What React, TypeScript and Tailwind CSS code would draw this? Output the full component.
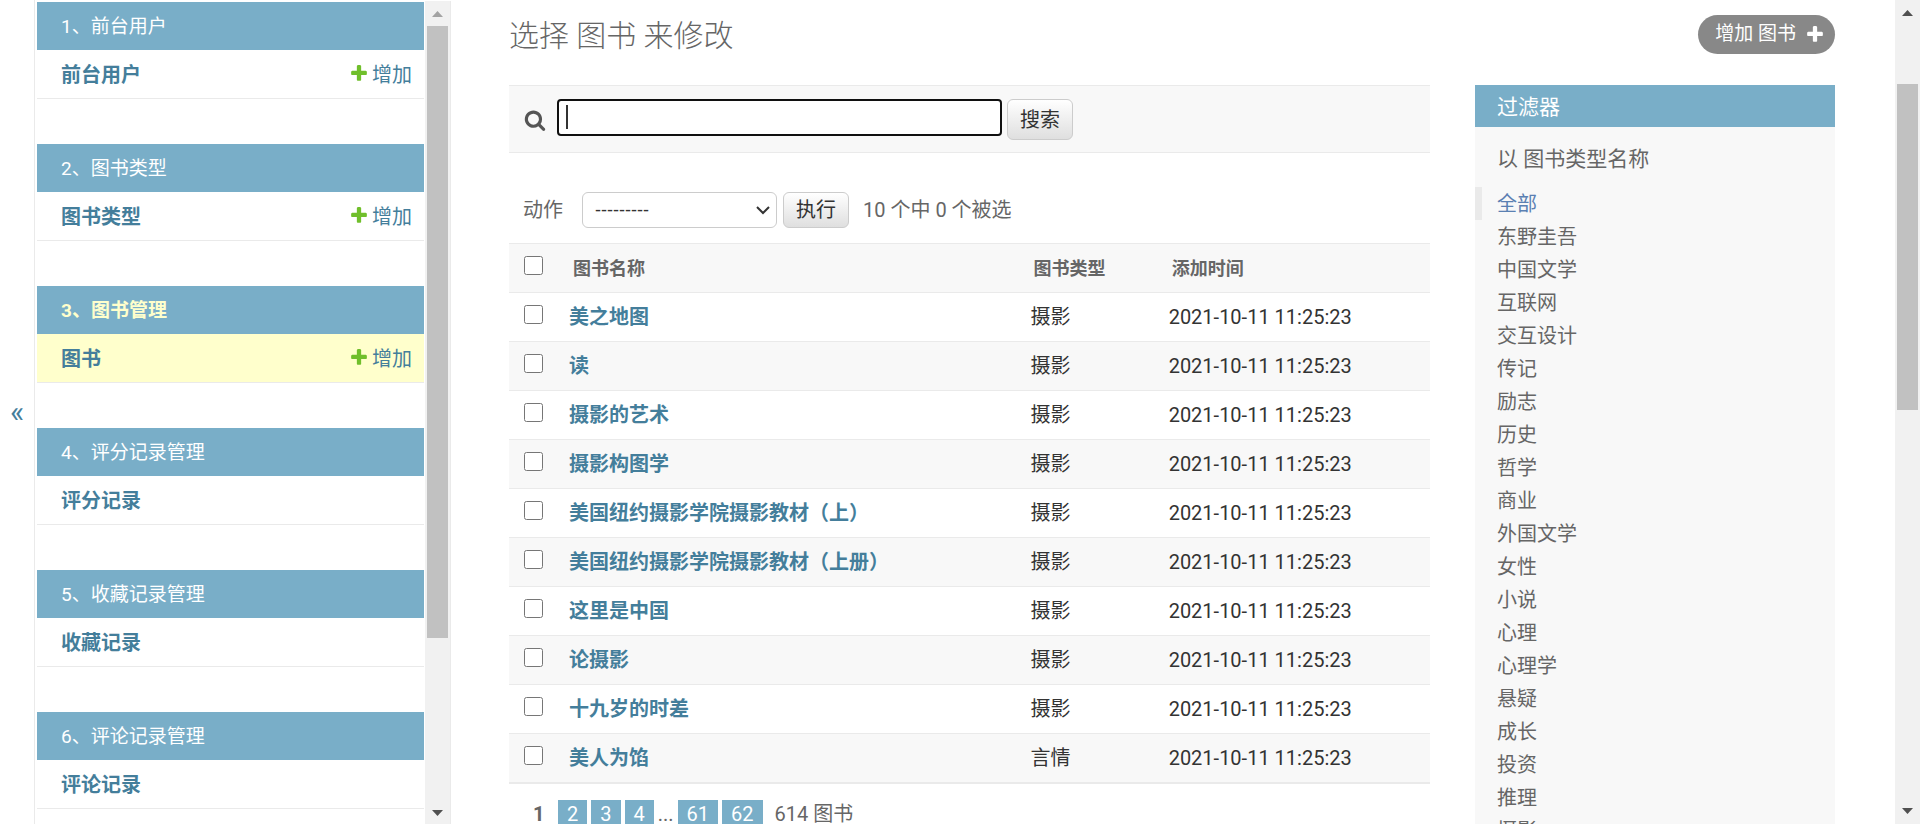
const navApps = [
  { caption: "1、前台用户", model: "前台用户", canAdd: true },
  { caption: "2、图书类型", model: "图书类型", canAdd: true },
  { caption: "3、图书管理", model: "图书", canAdd: true, current: true },
  { caption: "4、评分记录管理", model: "评分记录" },
  { caption: "5、收藏记录管理", model: "收藏记录" },
  { caption: "6、评论记录管理", model: "评论记录" },
];

const books = [
  { name: "美之地图", type: "摄影" },
  { name: "读", type: "摄影" },
  { name: "摄影的艺术", type: "摄影" },
  { name: "摄影构图学", type: "摄影" },
  { name: "美国纽约摄影学院摄影教材（上）", type: "摄影" },
  { name: "美国纽约摄影学院摄影教材（上册）", type: "摄影" },
  { name: "这里是中国", type: "摄影" },
  { name: "论摄影", type: "摄影" },
  { name: "十九岁的时差", type: "摄影" },
  { name: "美人为馅", type: "言情" },
];

const bookTypes = [
  "全部", "东野圭吾", "中国文学", "互联网", "交互设计", "传记", "励志",
  "历史", "哲学", "商业", "外国文学", "女性", "小说", "心理", "心理学",
  "悬疑", "成长", "投资", "推理", "摄影",
];

const PlusIcon = ({ className }: { className: string }) => (
  <svg viewBox="0 0 1792 1792" className={`size-5 shrink-0 ${className}`} fill="currentColor" aria-hidden="true">
    <path d="M1600 796v192q0 40-28 68t-68 28h-416v416q0 40-28 68t-68 28h-192q-40 0-68-28t-28-68v-416h-416q-40 0-68-28t-28-68v-192q0-40 28-68t68-28h416v-416q0-40 28-68t68-28h192q40 0 68 28t28 68v416h416q40 0 68 28t28 68z" />
  </svg>
);

const SearchIcon = () => (
  <svg viewBox="0 0 1792 1792" className="size-[22px]" fill="#555" aria-hidden="true">
    <path d="M1216 832q0-185-131.5-316.5t-316.5-131.5-316.5 131.5-131.5 316.5 131.5 316.5 316.5 131.5 316.5-131.5 131.5-316.5zm512 832q0 52-38 90t-90 38q-54 0-90-38l-343-342q-179 124-399 124-143 0-273.5-55.5t-225-150-150-225-55.5-273.5 55.5-273.5 150-225 225-150 273.5-55.5 273.5 55.5 225 150 150 225 55.5 273.5q0 220-124 399l343 343q37 37 37 90z" />
  </svg>
);

const ScrollArrow = ({ down, color }: { down?: boolean; color: string }) => (
  <svg viewBox="0 0 11 6" className="w-[11px] h-[6px] shrink-0" fill={color} aria-hidden="true">
    <path d={down ? "M0 0H11L5.5 6Z" : "M0 6H11L5.5 0Z"} />
  </svg>
);

const Sidebar = () => (
  <nav className="w-[390px] shrink-0 pl-0.5 pr-px pt-0.5 overflow-hidden">
    {navApps.map((app) => (
      <section key={app.caption} className="mb-[45px]">
        <h2 className="h-12 pl-6 pt-0.5 flex items-center bg-[#79aec8]">
          <a
            href="#"
            className={app.current ? "text-[19px] font-bold text-[#ffffcc]" : "text-[19px] text-white"}
          >
            {app.caption}
          </a>
        </h2>
        <div
          className={`h-[49px] pl-6 pr-3 pt-0.5 flex items-center justify-between border-b border-[#eaeaea] text-[#447e9b] ${
            app.current ? "bg-[#ffffcc]" : "bg-white"
          }`}
        >
          <a href="#" className="font-bold">
            {app.model}
          </a>
          {app.canAdd && (
            <a href="#" className="flex items-center gap-[3px]">
              <PlusIcon className="mb-1 text-[#70bf2b]" />
              增加
            </a>
          )}
        </div>
      </section>
    ))}
  </nav>
);

const ChangeList = () => (
  <div className="flex-1 min-w-0">
    <form className="h-[68px] px-[15px] pt-[13px] flex items-start bg-[#f8f8f8] border-y border-[#eaeaea]">
      <label htmlFor="searchbar" className="w-8 pt-2.5 shrink-0">
        <SearchIcon />
      </label>
      <div className="relative mr-[5px] ml-px">
        <input
          id="searchbar"
          type="text"
          aria-label="搜索"
          className="block w-[445px] h-[37px] px-2 bg-white border-2 border-[#101010] rounded-[4px] outline-none text-[#333] caret-transparent"
        />
        <span className="absolute left-[9px] top-[6px] w-0.5 h-6 bg-[#333]" />
      </div>
      <button
        type="submit"
        className="w-[66px] h-[41px] border border-[#ccc] rounded-md bg-linear-to-b from-white to-[#dfdfdf] text-[#333]"
      >
        搜索
      </button>
    </form>

    <div className="h-[90px] pt-[39px] pl-3.5 flex items-start">
      <label htmlFor="action" className="w-[59px] leading-9">
        动作
      </label>
      <div className="relative mr-1.5">
        <select
          id="action"
          className="block appearance-none w-[195px] h-9 pl-3 bg-white border border-[#ccc] rounded-md font-['Liberation_Sans',sans-serif] text-lg text-[#333]"
        >
          <option>---------</option>
        </select>
        <svg
          viewBox="0 0 14 9"
          className="absolute right-[7px] top-[14px] w-[14px] h-[9px] pointer-events-none"
          fill="none"
          stroke="#333"
          strokeWidth="2"
          aria-hidden="true"
        >
          <path d="M1 1L7 7L13 1" />
        </svg>
      </div>
      <button
        type="button"
        className="w-[66px] h-9 border border-[#ccc] rounded-md bg-linear-to-b from-white to-[#dfdfdf] text-[#333]"
      >
        执行
      </button>
      <span className="ml-3.5 leading-9">10 个中 0 个被选</span>
    </div>

    <table className="w-full table-fixed border-collapse text-left">
      <colgroup>
        <col className="w-[49px]" />
        <col className="w-1/2" />
        <col className="w-[15%]" />
        <col />
      </colgroup>
      <thead className="text-lg text-[#666]">
        <tr className="h-[49px] bg-[#f8f8f8] border-y border-[#eaeaea]">
          <th className="pl-[15px] pt-3 align-top">
            <input type="checkbox" aria-label="全选" className="block size-[19px]" />
          </th>
          <th className="pl-[15px] pt-0.5">图书名称</th>
          <th className="pl-[15px] pt-0.5">图书类型</th>
          <th className="pl-[15px] pt-0.5">添加时间</th>
        </tr>
      </thead>
      <tbody className="text-[#333]">
        {books.map((book) => (
          <tr
            key={book.name}
            className="h-[49px] border-b border-[#eaeaea] even:bg-[#f8f8f8] last:border-b-2"
          >
            <td className="pl-[15px] pt-3 align-top">
              <input type="checkbox" aria-label={book.name} className="block size-[19px]" />
            </td>
            <th className="pl-[11px] font-bold">
              <a href="#" className="text-[#447e9b]">
                {book.name}
              </a>
            </th>
            <td className="pl-3">{book.type}</td>
            <td className="pl-3">2021-10-11 11:25:23</td>
          </tr>
        ))}
      </tbody>
    </table>

    <div className="pt-4 pl-6 flex gap-1 leading-7">
      <span className="w-[21px] font-bold">1</span>
      {["2", "3", "4"].map((page) => (
        <a key={page} href="#" className="px-[9px] bg-[#79aec8] text-white">
          {page}
        </a>
      ))}
      <span>...</span>
      {["61", "62"].map((page) => (
        <a key={page} href="#" className="px-[9px] bg-[#79aec8] text-white">
          {page}
        </a>
      ))}
      <span className="ml-2">614 图书</span>
    </div>
  </div>
);

const Filter = () => (
  <aside className="w-[360px] shrink-0 bg-[#f8f8f8]">
    <h2 className="h-[42px] pl-[22px] pt-1 flex items-center bg-[#79aec8] text-[21px] text-white">过滤器</h2>
    <h3 className="h-[60px] pt-4 pl-[22px] text-[21px] leading-8">以 图书类型名称</h3>
    <ul>
      {bookTypes.map((type, i) => (
        <li
          key={type}
          className={
            i === 0
              ? "border-l-[7px] border-[#eaeaea] pl-[15px] pt-0.5 leading-[31px] text-[#5b80b2]"
              : "pl-[22px] pt-0.5 leading-[31px]"
          }
        >
          <a href="#">{type}</a>
        </li>
      ))}
    </ul>
  </aside>
);

const App = () => {
  return (
    <div className="h-screen overflow-hidden flex bg-white text-[20px] text-[#666] font-[Roboto,'Noto_Sans_CJK_SC',sans-serif]">
      <button
        type="button"
        aria-label="切换导航"
        className="w-[35px] shrink-0 border-r border-[#eaeaea] text-3xl text-[#447e9b]"
      >
        «
      </button>
      <Sidebar />
      <div className="w-[26px] shrink-0 mt-px flex flex-col items-center bg-[#f1f1f1] border-r border-[#eaeaea]">
        <div className="h-[25px] shrink-0 pt-2.5">
          <ScrollArrow color="#a3a3a3" />
        </div>
        <div className="w-[21px] h-[612px] bg-[#c1c1c1]" />
        <div className="mt-auto pb-2">
          <ScrollArrow down color="#505050" />
        </div>
      </div>

      <main className="flex-1 min-w-0 pl-[58px] pr-[60px]">
        <div className="h-[85px] pt-[15px] flex items-start justify-between">
          <h1 className="pt-px text-3xl leading-10 font-light">选择 图书 来修改</h1>
          <a
            href="#"
            className="h-[39px] pl-[17px] pr-2.5 flex items-center gap-[9px] rounded-full bg-[#888] text-[19px] text-white"
          >
            增加 图书
            <PlusIcon className="mb-0.5 text-white" />
          </a>
        </div>
        <div className="flex gap-[45px]">
          <ChangeList />
          <Filter />
        </div>
      </main>

      <div className="w-[25px] shrink-0 flex flex-col items-center bg-[#f1f1f1]">
        <div className="h-[84px] shrink-0 pt-2.5">
          <ScrollArrow color="#505050" />
        </div>
        <div className="w-[21px] h-[326px] bg-[#c1c1c1]" />
        <div className="mt-auto pb-2.5">
          <ScrollArrow down color="#505050" />
        </div>
      </div>
    </div>
  );
};

export default App;
